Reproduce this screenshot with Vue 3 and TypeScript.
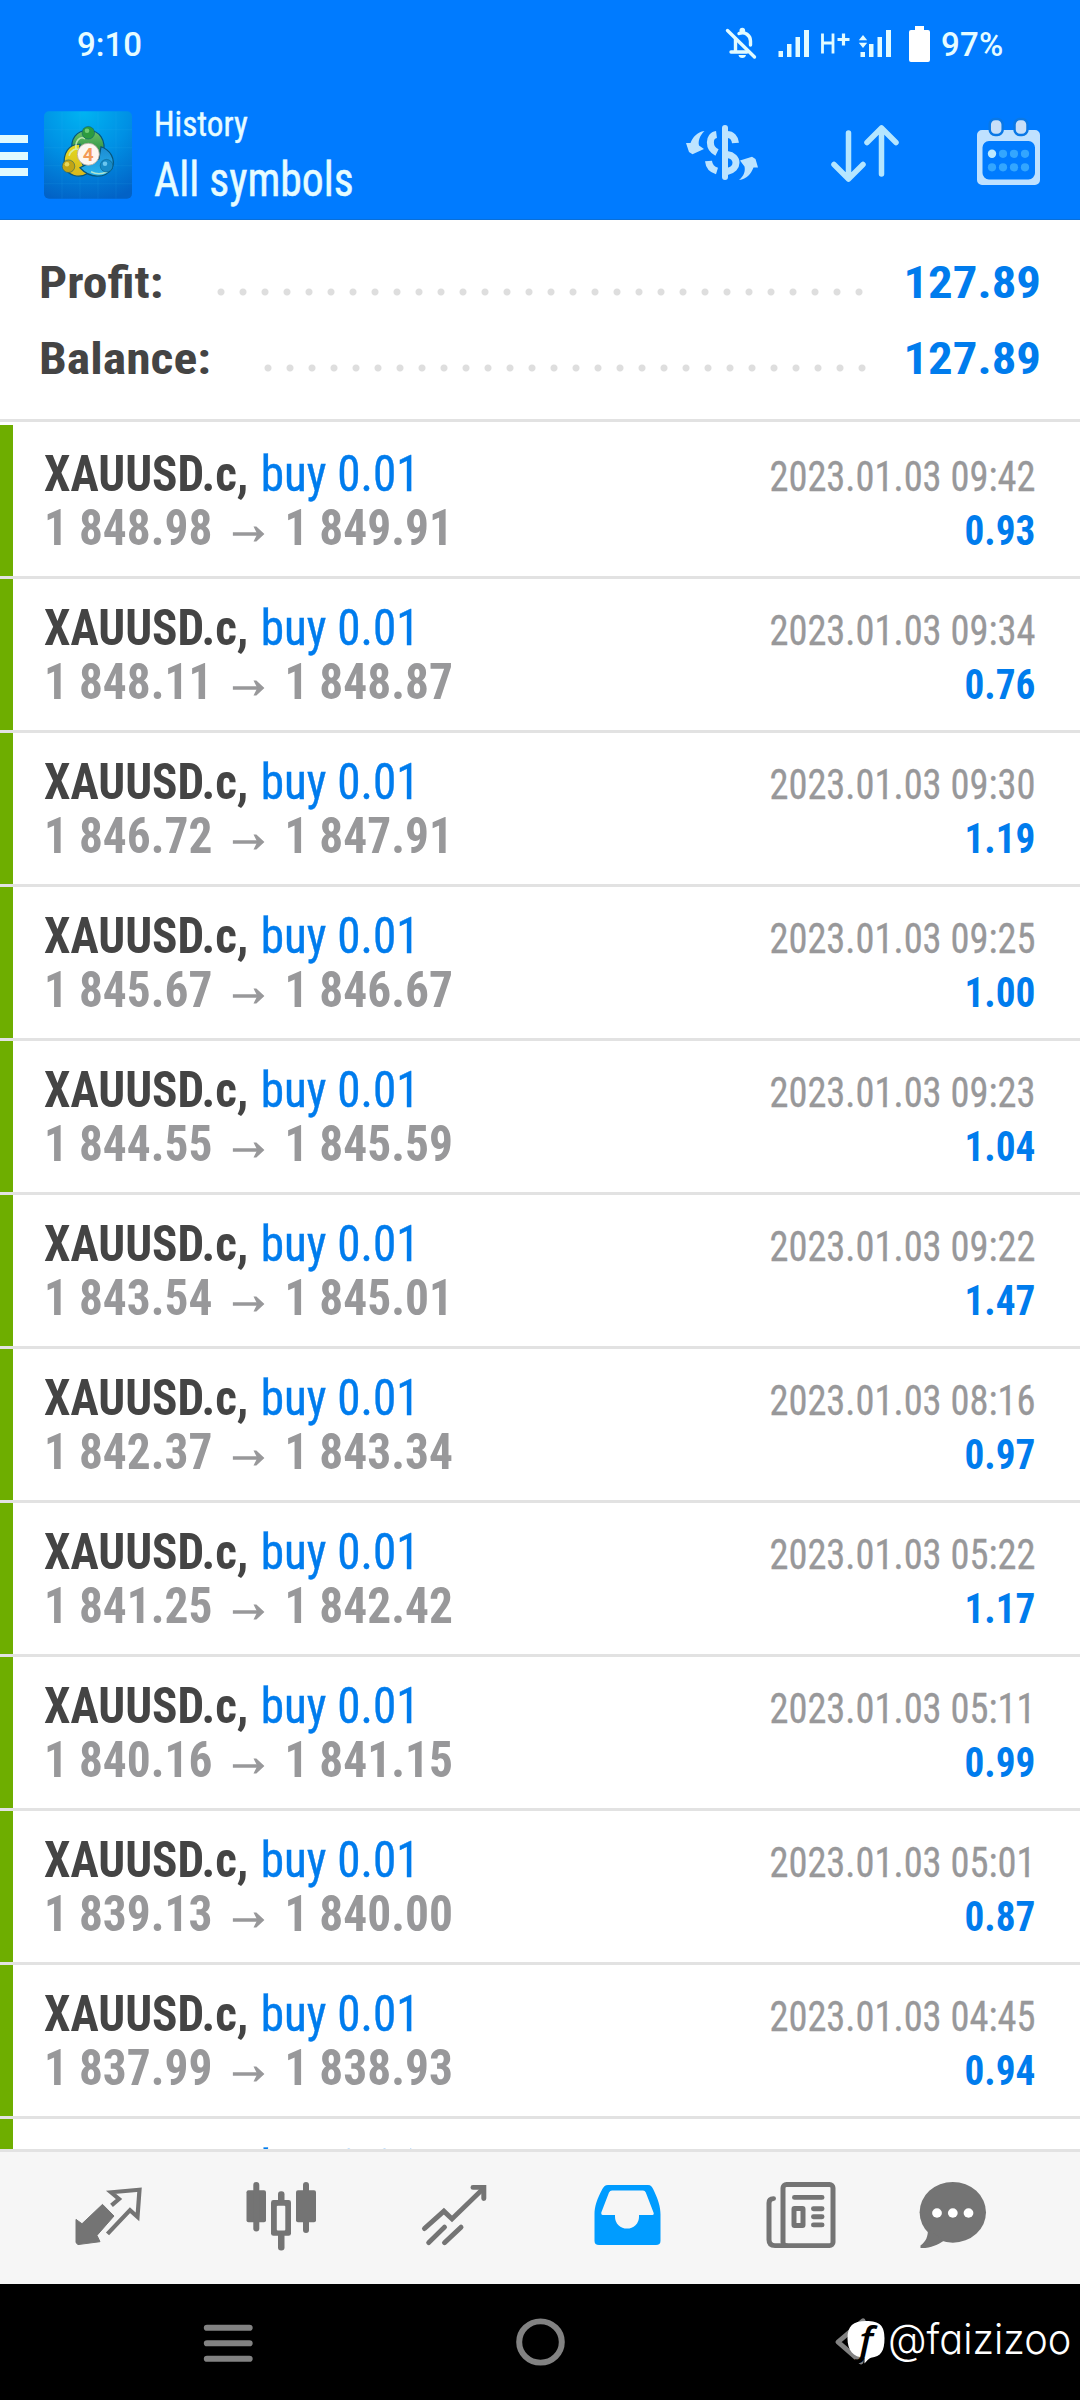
<script setup lang="ts">
interface Deal {
  open: string
  close: string
  time: string
  profit: string
}

const deals: Deal[] = [
  { open: '1 848.98', close: '1 849.91', time: '2023.01.03 09:42', profit: '0.93' },
  { open: '1 848.11', close: '1 848.87', time: '2023.01.03 09:34', profit: '0.76' },
  { open: '1 846.72', close: '1 847.91', time: '2023.01.03 09:30', profit: '1.19' },
  { open: '1 845.67', close: '1 846.67', time: '2023.01.03 09:25', profit: '1.00' },
  { open: '1 844.55', close: '1 845.59', time: '2023.01.03 09:23', profit: '1.04' },
  { open: '1 843.54', close: '1 845.01', time: '2023.01.03 09:22', profit: '1.47' },
  { open: '1 842.37', close: '1 843.34', time: '2023.01.03 08:16', profit: '0.97' },
  { open: '1 841.25', close: '1 842.42', time: '2023.01.03 05:22', profit: '1.17' },
  { open: '1 840.16', close: '1 841.15', time: '2023.01.03 05:11', profit: '0.99' },
  { open: '1 839.13', close: '1 840.00', time: '2023.01.03 05:01', profit: '0.87' },
  { open: '1 837.99', close: '1 838.93', time: '2023.01.03 04:45', profit: '0.94' },
  { open: '', close: '', time: '', profit: '' },
]
</script>

<template>
  <div class="screen">
    <header class="top">
      <div class="status">
        <span class="clock">9:10</span>
        <svg class="status-icons" viewBox="720 20 220 50" width="220" height="50">
          <g fill="none" stroke="#e2fbff" stroke-width="3.4" stroke-linecap="round" stroke-linejoin="round">
            <path d="M727.500 30.500 L754.500 57" />
            <path d="M731 52 H747 M735.500 50.500 V39" />
            <path d="M739 33.500 C745 31 750.500 35.500 750.500 41 V45" />
          </g>
          <circle cx="742.300" cy="30.500" r="2.800" fill="#e2fbff" />
          <path d="M738.500 55 H746 A3.800 3.500 0 0 1 738.500 55Z" fill="#e2fbff" />
          <path fill="#e2fbff" d="M778.500 51h4.500v6h-4.500zM787 44h4.500v13H787zM795.500 37h4.500v20h-4.500zM804 30h5v27h-5zM860.500 52h4.500v5h-4.500zM869 44h4.500v13H869zM877.500 37h4.500v20h-4.500zM886 30h5v27h-5z" />
          <path fill="#e2fbff" d="M863 35l4.200 5.200h-8.400zM863 48l4.200-5.200h-8.400z" />
          <path d="M822.500 33.500 V53.500 M833 33.500 V53.500 M822.500 43 H833" fill="none" stroke="#e2fbff" stroke-width="2.800" />
          <path d="M837.500 39.500 H849.500 M843.500 33.500 V45.500" fill="none" stroke="#e2fbff" stroke-width="3.200" />
          <path fill="#fff" d="M915 26h9v4h4a2 2 0 0 1 2 2v28a2 2 0 0 1-2 2h-17a2 2 0 0 1-2-2V32a2 2 0 0 1 2-2h4z" />
        </svg>
        <span class="battery">97%</span>
      </div>
      <div class="bar">
        <div class="burger"><i></i><i></i><i></i></div>
        <svg class="logo" viewBox="44 110.500 88 87.500" width="88" height="88">
          <defs>
            <radialGradient id="tile" cx="0.450" cy="0" r="1.050">
              <stop offset="0" stop-color="#00b4f2" />
              <stop offset="0.500" stop-color="#0090e4" />
              <stop offset="1" stop-color="#0262c6" />
            </radialGradient>
            <linearGradient id="green" x1="0" y1="0" x2="0" y2="1">
              <stop offset="0" stop-color="#6fc466" /><stop offset="1" stop-color="#15803a" />
            </linearGradient>
            <linearGradient id="yellow" x1="0" y1="0" x2="0" y2="1">
              <stop offset="0" stop-color="#e3d91f" /><stop offset="1" stop-color="#d9b81c" />
            </linearGradient>
            <linearGradient id="cyan" x1="0" y1="0" x2="0" y2="1">
              <stop offset="0" stop-color="#1c8bd2" /><stop offset="1" stop-color="#29b4ee" />
            </linearGradient>
          </defs>
          <rect x="44" y="110.500" width="88" height="87.500" rx="5" fill="url(#tile)" />
          <path d="M62 111V198M80 111V198M98 111V198M116 111V198M44 129H132M44 147H132M44 165H132M44 183H132" stroke="#3cc0f5" stroke-opacity="0.120" />
          <g stroke="#07557a" stroke-width="1.200">
            <path d="M72.500 151 C69.500 138 77 129.500 88 129.500 C99 129.500 107 139 103 154 L97 158 L80 150Z" fill="url(#green)" />
            <path d="M80 143.500 C69 143 62.500 152 64.500 166 C68 175 79 178 87 173 L82 162 L79 154Z" fill="url(#yellow)" />
            <path d="M101 146 C110 149 116 158 112 168 C105 178 90 178 80 167 L90 162 L99 158Z" fill="url(#cyan)" />
          </g>
          <path d="M76 148 C75 140 80 135 85 138 M69 155 C71 149 76 147 79 149 M91 171 C97 174 103 173 107 171" fill="none" stroke="#d9f6c8" stroke-width="1.600" stroke-opacity="0.750" />
          <g stroke="#07557a" stroke-opacity="0.500">
            <circle cx="88.300" cy="132" r="6.300" fill="#2c9b3f" />
            <circle cx="68.500" cy="165.500" r="6.300" fill="#c0a416" />
            <circle cx="106.500" cy="165" r="6.300" fill="#188bc8" />
          </g>
          <circle cx="87" cy="130" r="2.300" fill="#8de08b" fill-opacity="0.700" />
          <circle cx="67" cy="163.500" r="2.300" fill="#f6ec7a" fill-opacity="0.700" />
          <circle cx="105" cy="163" r="2.300" fill="#8fe0ff" fill-opacity="0.700" />
          <circle cx="88.300" cy="153.500" r="11" fill="#fdf6f1" stroke="#b5aaa0" stroke-width="0.800" />
          <text x="88.300" y="160.200" text-anchor="middle" class="logo-num">4</text>
        </svg>
        <div class="titles">
          <div class="sub">History</div>
          <div class="main">All symbols</div>
        </div>
        <svg class="actions" viewBox="680 110 370 80" width="370" height="80">
          <g fill="#bde4ff">
            <path d="M704.500 131 C699.500 136 698 141 699 145.500 L704 149 L692.500 154.300 L689 152 L686 143 L690.500 143 C693 137 697 132 704.500 131Z" />
            <path d="M739 180 C744 176 745.500 171 744.500 166.500 L740 160.500 L752 156.700 L755.500 159 L758 167.500 L753.500 167.500 C751 174 747 179 739 180Z" />
          </g>
          <g fill="none" stroke="#bde4ff" stroke-width="7">
            <path d="M716.500 134.500 C708.500 135.500 708 148 717 152.500" />
            <path d="M708.500 161 C709 166 712 169.500 717 171" />
            <path d="M727 134.500 C732 134.500 735 138 735.500 143" />
            <path d="M727 154.500 C739 156 739 169 727 171.500" />
            <path d="M725 128 V177" stroke-width="6" stroke-linecap="round" />
          </g>
          <g fill="none" stroke="#b5e6ff" stroke-width="5.500" stroke-linecap="round" stroke-linejoin="round">
            <path d="M848.500 133 V179 M834 164.500 L848.500 179 L863 164.500" />
            <path d="M881.500 174 V128 M867 142.500 L881.500 128 L896 142.500" />
          </g>
          <path fill="#bfe1ff" fill-rule="evenodd" d="M982 130h53a5 5 0 0 1 5 5v45a5 5 0 0 1-5 5h-53a5 5 0 0 1-5-5v-45a5 5 0 0 1 5-5zM989 141a6.500 6.500 0 0 0-6.500 6.500V173a6.500 6.500 0 0 0 6.500 6.500h39.500a6.500 6.500 0 0 0 6.500-6.500v-25.500a6.500 6.500 0 0 0-6.500-6.500z" />
          <g fill="#c9dff8" stroke="#0a78e6" stroke-width="2.500">
            <rect x="989.700" y="119" width="13" height="16" rx="5.500" />
            <rect x="1014.500" y="119" width="13" height="16" rx="5.500" />
          </g>
          <circle cx="992" cy="153.800" r="4.200" fill="#bdeaff" />
          <g fill="#33a6ff">
            <circle v-for="n in 3" :key="'a' + n" :cx="992 + n * 11" cy="153.800" r="4.100" />
            <circle v-for="n in 4" :key="'b' + n" :cx="981 + n * 11" cy="167.300" r="4.100" />
          </g>
        </svg>
      </div>
    </header>

    <section class="summary">
      <div class="sum-row">
        <span class="label">Profit:</span>
        <span class="dots first"></span>
        <span class="value">127.89</span>
      </div>
      <div class="sum-row">
        <span class="label">Balance:</span>
        <span class="dots second"></span>
        <span class="value">127.89</span>
      </div>
    </section>

    <main class="list">
      <article v-for="(d, i) in deals" :key="i" class="deal">
        <div class="stripe"></div>
        <div class="left">
          <div class="line1"><span class="sym">XAUUSD.c,</span><span class="side">buy 0.01</span></div>
          <div v-if="d.open" class="line2">
            <span class="price">{{ d.open }}</span>
            <svg class="arrow" viewBox="0 0 34 18" width="34" height="18">
              <path d="M0 9H29" fill="none" stroke="#98989a" stroke-width="3.400" />
              <path d="M22 1.500L25 1.500L33.500 9L25 16.500H22L26 9Z" fill="#98989a" />
            </svg>
            <span class="price">{{ d.close }}</span>
          </div>
        </div>
        <div v-if="d.open" class="right">
          <div class="time">{{ d.time }}</div>
          <div class="pl">{{ d.profit }}</div>
        </div>
      </article>
    </main>

    <nav class="tabs">
      <svg viewBox="60 2172 97 97" preserveAspectRatio="none">
        <path d="M111.500 2209.500L119 2203L111 2196L139.500 2193.300L137.500 2221.500L130 2214.500L107.500 2239" fill="none" stroke="#747474" stroke-width="4.200" />
        <path d="M102.500 2208.500L114 2220.500L97 2240.500L100 2247L78 2250L76 2248L76 2224L82 2228.500Z" fill="#747474" stroke="#747474" stroke-linejoin="round" />
      </svg>
      <svg viewBox="233 2172 97 97" preserveAspectRatio="none">
        <g fill="#747474">
          <rect x="246.500" y="2194" width="19.500" height="33" rx="2" /><rect x="253.300" y="2185.500" width="6" height="51" rx="3" />
          <rect x="296" y="2194" width="20" height="33" rx="2" /><rect x="303" y="2185.500" width="6" height="52.500" rx="3" />
          <rect x="278" y="2195" width="6.500" height="61" rx="3" /><rect x="271" y="2204" width="20" height="37" rx="2.500" />
        </g>
        <rect x="276.800" y="2210" width="8.500" height="25.500" rx="1" fill="#f6f6f6" />
      </svg>
      <svg viewBox="406 2172 97 97" preserveAspectRatio="none">
        <g fill="none" stroke="#747474" stroke-width="5" stroke-linecap="round">
          <path d="M424.500 2233.500L443.900 2215.500L452 2223.500L483.500 2192" />
          <path d="M473 2191H483.800V2202.500" /><path d="M428.700 2248L444.500 2232M444.500 2248L461 2232" />
        </g>
      </svg>
      <svg viewBox="579 2172 97 97" preserveAspectRatio="none">
        <path fill="#009cff" fill-rule="evenodd" d="M608 2188.500H648C651 2188.500 652 2190.500 653 2192.500C658 2203 660.500 2211 660.500 2219V2246Q660.500 2250.500 656 2250.500H599Q594.500 2250.500 594.500 2246V2219C594.500 2211 597 2203 602.500 2192.500C604 2190 605 2188.500 608 2188.500ZM612 2194.300Q610 2194.300 609 2196.300L601.300 2217Q600.800 2219.500 602.500 2219.500H615V2221.500A12 12 0 0 0 639 2221.500V2219.500H652.500Q654.300 2219.500 653.500 2217L645.800 2196.300Q645 2194.300 643 2194.300Z" />
      </svg>
      <svg viewBox="752 2172 97 97" preserveAspectRatio="none">
        <g fill="none" stroke="#747474" stroke-width="5" stroke-linecap="round">
          <rect x="783" y="2188" width="50" height="63" rx="3.500" />
          <path d="M773.500 2202.500Q769 2202.500 769 2207V2245Q769 2251 775 2251H786" />
          <path d="M794.500 2201.300H822M813.500 2213H822M813.500 2221.300H822M813.500 2229.700H822" />
          <rect x="794" y="2212.800" width="9" height="17.500" rx="0.500" />
        </g>
      </svg>
      <svg class="chat" viewBox="904 2172 97 97" preserveAspectRatio="none">
        <ellipse cx="952.800" cy="2216.700" rx="33.200" ry="31.300" fill="#747474" />
        <path d="M928 2234C928 2242 926 2247 920.500 2251V2253.500C930 2254 938 2250 944 2246Z" fill="#747474" />
        <circle cx="937" cy="2217.400" r="4.900" fill="#fff" /><circle cx="952.800" cy="2217.400" r="4.900" fill="#fff" /><circle cx="968.500" cy="2217.400" r="4.900" fill="#fff" />
      </svg>
    </nav>

    <footer class="sysnav">
      <svg viewBox="180 2320 97 62" preserveAspectRatio="none">
        <path d="M207 2336.300H249.500M207 2352.300H249.500M207 2368.300H249.500" stroke="#828282" stroke-width="6.400" stroke-linecap="round" />
      </svg>
      <svg viewBox="491.500 2320 97 62" preserveAspectRatio="none">
        <circle cx="540" cy="2351" r="21.300" fill="none" stroke="#828282" stroke-width="6" />
      </svg>
      <svg viewBox="803 2320 97 62" preserveAspectRatio="none">
        <path d="M863 2329L838 2351L861 2371.500V2360" fill="none" stroke="#828282" stroke-width="5" stroke-linecap="round" stroke-linejoin="round" />
      </svg>
      <div class="mark">
        <svg viewBox="846 2326 41 48" preserveAspectRatio="none">
          <path d="M866 2329C880 2329 884.500 2334 884.500 2347C884.500 2360 881 2366 871 2367C869 2367.500 867 2370 864.500 2373L864.500 2367C853 2367 847.500 2359 847.500 2347C847.500 2334 853 2329 866 2329Z" fill="#fff" />
          <text x="866" y="2363" text-anchor="middle" class="mark-f">f</text>
        </svg>
        <span class="handle">@faizizoo</span>
      </div>
    </footer>
  </div>
</template>

<style>
body { background: #fff; }
</style>

<style scoped>
.screen {
  width: 1080px;
  height: 2400px;
  overflow: hidden;
  display: flex;
  flex-direction: column;
  background: #fff;
  font-family: "Roboto Condensed", Roboto, "Liberation Sans", sans-serif;
  font-stretch: 75%;
  font-kerning: normal;
}
svg { display: block; flex: none; }
.top {
  flex: none;
  height: 220px;
  box-sizing: border-box;
  background: #007bff;
  border-bottom: 1px solid #0a6fd8;
  color: #e6fcff;
}
.status {
  height: 90px;
  display: flex;
  align-items: center;
  padding: 0 78px 0 77px;
  font-family: Roboto, sans-serif;
  font-stretch: 100%;
  font-weight: 500;
  font-size: 33px;
  line-height: 90px;
}
.clock { margin-right: auto; }
.status-icons { margin-right: 1px; }
.battery { width: 61px; white-space: nowrap; letter-spacing: 0.3px; }
.bar { display: flex; height: 129px; }
.burger { width: 28px; margin: 45px 16px 0 0; flex: none; }
.burger i { display: block; height: 8px; margin-bottom: 8.5px; background: #e0faff; }
.logo { margin-top: 20.5px; }
.logo-num { font: bold 19px Roboto, sans-serif; fill: #f39a58; }
.titles { margin-left: 22px; width: 240px; white-space: nowrap; }
.titles > div { transform-origin: left; }
.sub { font-size: 35.5px; line-height: 42px; margin-top: 13px; transform: scaleX(0.935); -webkit-text-stroke: 0.4px; }
.main { font-size: 47.5px; line-height: 56px; margin-top: 7px; transform: scaleX(0.92); -webkit-text-stroke: 0.5px; }
.actions { margin: 20px 0 0 286px; }
.summary {
  flex: none;
  height: 202px;
  box-sizing: border-box;
  padding: 24.5px 39px 0;
  border-bottom: 3px solid #e2e2e2;
}
.sum-row { height: 76px; display: flex; line-height: 76px; font-size: 45px; font-weight: 700; color: #444; }
.label { flex: none; transform: scaleX(1.103); transform-origin: left; }
.dots {
  flex: none;
  height: 8px;
  margin-top: 43.500px;
  background: radial-gradient(circle at 11px 4px, #dedede 3px, transparent 4px) 0 0 / 22px 8px repeat-x;
}
.dots.first { width: 660px; margin-left: auto; margin-right: 171px; }
.dots.second { width: 616px; margin-left: auto; margin-right: 168px; }
.value { width: 0; display: flex; justify-content: flex-end; color: #007ced; transform: scaleX(1.085); transform-origin: right; }
.list { flex: none; box-sizing: border-box; height: 1727px; padding-top: 3px; overflow: hidden; }
.deal {
  height: 154px;
  box-sizing: border-box;
  padding-right: 45px;
  border-bottom: 3px solid #e2e2e2;
  display: flex;
  white-space: nowrap;
}
.stripe { width: 13px; background: #6eae00; }
.left { padding: 22px 0 0 31px; }
.line1, .line2 { height: 54px; line-height: 54px; font-size: 50px; transform-origin: left; }
.line1 { transform: scaleX(0.944); }
.sym { font-weight: 700; color: #444; margin-right: 13px; }
.side { color: #007ced; -webkit-text-stroke: 0.4px; }
.line2 { font-weight: 700; color: #98989a; display: flex; transform: scaleX(0.948); }
.arrow { margin: 24px 20.5px 0 21.5px; }
.right { margin-left: auto; padding-top: 25px; text-align: right; }
.right > div { height: 54px; line-height: 54px; font-size: 42px; transform-origin: right; }
.time { color: #98989a; transform: scaleX(0.916); -webkit-text-stroke: 0.3px; }
.pl { font-weight: 700; color: #007ced; transform: scaleX(0.935); }
.tabs {
  flex: none;
  height: 135px;
  box-sizing: border-box;
  border-top: 3px solid #e2e2e2;
  background: #f6f6f6;
  display: flex;
  gap: 76px;
  padding: 17px 0 0 60px;
}
.tabs svg { width: 97px; height: 94px; }
.chat { margin-left: -21px; }
.sysnav {
  position: relative;
  flex: 1;
  background: #000;
  display: flex;
  gap: 214.500px;
  padding: 28px 0 0 180px;
}
.sysnav > svg { width: 97px; height: 60px; }
.mark { position: absolute; left: 846px; top: 34px; display: flex; align-items: center; }
.mark svg { width: 41px; height: 46.500px; }
.mark-f { font: italic 600 40px "Open Sans", sans-serif; fill: #000; }
.handle {
  color: #fff;
  font: 300 42px/48px Inter, sans-serif;
  font-feature-settings: "cv11";
  font-stretch: 100%;
  margin: -4px 0 0 1px;
  width: 180px;
  transform: scaleX(0.945);
  transform-origin: left;
}
</style>
